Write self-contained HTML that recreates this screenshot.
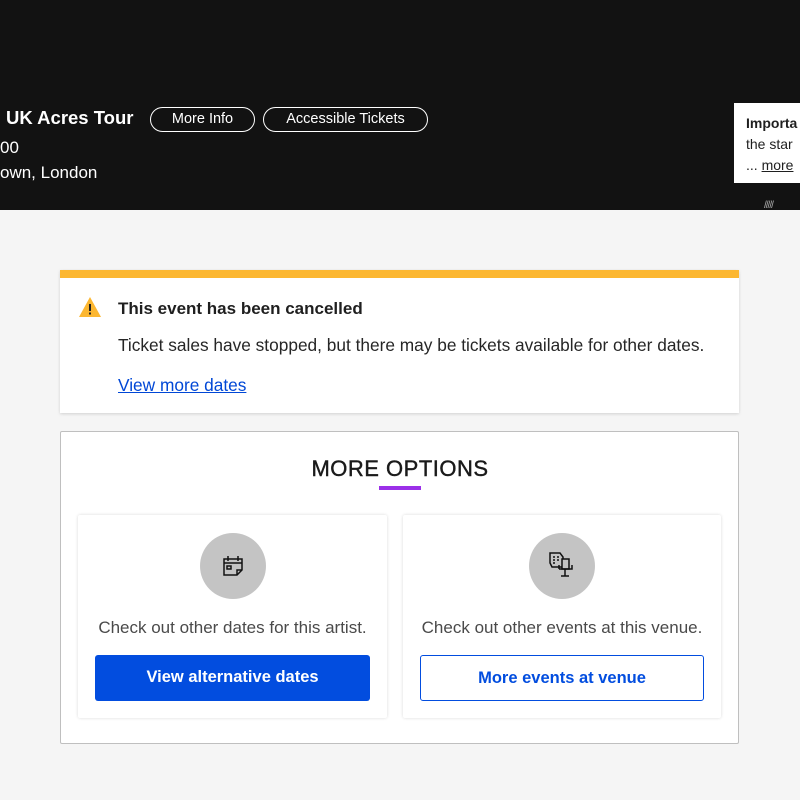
<!DOCTYPE html>
<html><head><meta charset="utf-8"><style>
*{margin:0;padding:0;box-sizing:border-box}
body{width:800px;height:800px;background:#f5f5f5;font-family:"Liberation Sans",sans-serif;position:relative;overflow:hidden;color:#1f1f1f}
.hdr{position:absolute;left:0;top:0;width:800px;height:210px;background:#121212;color:#fff}
.a{position:absolute;white-space:nowrap}
.pill{position:absolute;top:107px;height:25px;border:1.5px solid #fff;border-radius:13px;color:#fff;font-size:14.5px;line-height:22px;text-align:center}
.box{position:absolute;background:#fff}
.card{position:absolute;top:515px;height:203px;background:#fff;box-shadow:0 0 3px rgba(0,0,0,.15);border-radius:2px}
.circ{position:absolute;left:50%;top:18px;width:66px;height:66px;margin-left:-33px;border-radius:50%;background:#c4c4c4}
.ct{position:absolute;top:103px;width:100%;text-align:center;font-size:17px;color:#4a4a4a}
.btn{position:absolute;left:17px;right:17px;top:140px;height:46px;border-radius:3px;text-align:center;line-height:44px;font-size:16.5px;font-weight:bold}
</style></head><body>
<div class="hdr">
<div class="a" style="left:6px;top:107px;font-size:18.5px;font-weight:bold">UK Acres Tour</div>
<div class="pill" style="left:150px;width:105px">More Info</div>
<div class="pill" style="left:263px;width:165px">Accessible Tickets</div>
<div class="a" style="left:0;top:138px;font-size:17px">00</div>
<div class="a" style="left:0;top:163px;font-size:17px">own, London</div>
<div class="a" style="left:734px;top:103px;width:66px;height:80px;background:#fff;color:#1f1f1f;font-size:14px;line-height:21px;padding:10px 0 0 12px;overflow:hidden"><b>Importa</b><br>the star<br>... <u>more</u></div>
<div class="a" style="left:764px;top:200px;color:#aaa;font-size:10px;letter-spacing:-1px">/////</div>
</div>
<div class="box" style="left:60px;top:270px;width:679px;height:143px;box-shadow:0 1px 3px rgba(0,0,0,.15);border-top:8px solid #fcb731">
<svg class="a" style="left:18px;top:18px" width="24" height="22" viewBox="0 0 24 22"><path d="M12 1L23 21H1Z" fill="#fcb731"/><rect x="11" y="8" width="2" height="7" fill="#222"/><rect x="11" y="16.5" width="2" height="2" fill="#222"/></svg>
<div class="a" style="left:58px;top:21px;font-size:17px;font-weight:bold">This event has been cancelled</div>
<div class="a" style="left:58px;top:57px;font-size:17.3px;color:#262626">Ticket sales have stopped, but there may be tickets available for other dates.</div>
<div class="a" style="left:58px;top:97px;font-size:17.3px;color:#0047d6;text-decoration:underline">View more dates</div>
</div>
<div class="box" style="left:60px;top:431px;width:679px;height:313px;border:1px solid #bfbfbf;border-radius:2px"></div>
<div class="a" style="left:0;width:800px;top:456px;text-align:center;font-size:22px;letter-spacing:0.5px;color:#1a1a1a;-webkit-text-stroke:0.4px #1a1a1a">MORE OPTIONS</div>
<div class="a" style="left:379px;top:486px;width:42px;height:4px;background:#9b30e8"></div>
<div class="card" style="left:78px;width:309px">
<div class="circ"><svg style="position:absolute;left:21px;top:21px" width="24" height="24" viewBox="0 0 24 24" fill="none" stroke="#111" stroke-width="1.5"><path d="M3 5h18v11l-5 5H3z"/><path d="M3 9h18M7 2v5M17 2v5M16 21v-5h5"/><rect x="6" y="12" width="4" height="3"/></svg></div>
<div class="ct">Check out other dates for this artist.</div>
<div class="btn" style="background:#024ddf;color:#fff">View alternative dates</div>
</div>
<div class="card" style="left:403px;width:318px">
<div class="circ"><svg style="position:absolute;left:19px;top:18px" width="28" height="30" viewBox="0 0 28 30" fill="none" stroke="#111" stroke-width="1.5"><path d="M2 2h10l3 4v10H4L2 12z"/><path d="M5 6h2M9 6h2M5 9h2M9 9h2M5 12h2"/><rect x="14" y="8" width="7" height="10" fill="#c4c4c4"/><path d="M11 18h13v-4M11 18v-4M17 18v7M13 25h8"/></svg></div>
<div class="ct">Check out other events at this venue.</div>
<div class="btn" style="border:1.5px solid #024ddf;color:#024ddf;background:#fff">More events at venue</div>
</div>
</body></html>
